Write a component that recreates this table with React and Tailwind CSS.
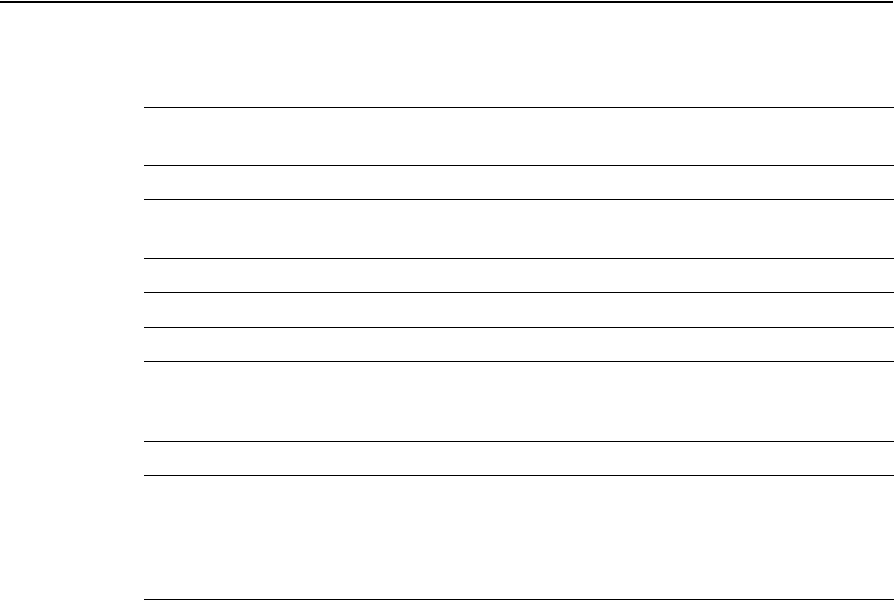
import React from "react";

const rows = [
  "h-[58px]",
  "h-[34px]",
  "h-[59px]",
  "h-[34px]",
  "h-[35px]",
  "h-[34px]",
  "h-[80px]",
  "h-[34px]",
  "h-[125px]",
];

export default function App() {
  return (
    <div className="h-[600px] bg-white font-['Liberation_Sans',sans-serif] overflow-hidden">
      <div className="mt-px h-[2px] w-[893px] bg-black" />
      <div className="pl-[144px] pt-[104px]">
        <div className="flex flex-col w-[750px]">
          {rows.map((h, i) => (
            <div
              key={i}
              className={`${h} border-t border-black ${i === rows.length - 1 ? "border-b" : ""}`}
            />
          ))}
        </div>
      </div>
    </div>
  );
}
